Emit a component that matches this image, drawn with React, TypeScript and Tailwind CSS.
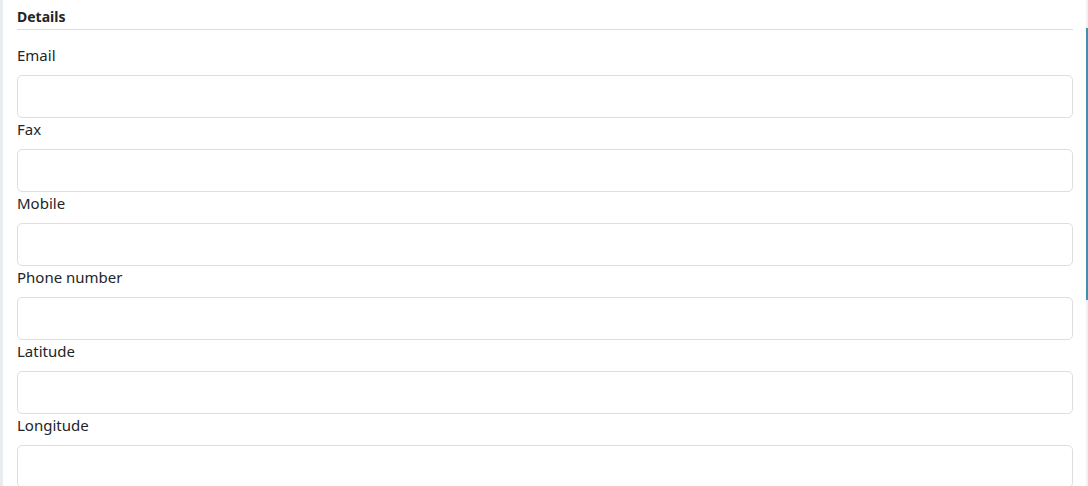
const fields = ["Email", "Fax", "Mobile", "Phone number", "Latitude", "Longitude"];

export default function App() {
  return (
    <div
      className="flex w-[1088px] h-[486px] overflow-hidden bg-white text-[#212529]"
      style={{ fontFamily: '"Noto Sans", "Open Sans", sans-serif' }}
    >
      {/* left gutter */}
      <div className="w-[3px] shrink-0 bg-[#e9ecef]" />

      {/* card */}
      <div className="flex-1 pl-[14px] pr-[13px] pt-[7px]">
        <div className="border-b border-[#dcdcdc] pb-[2px]">
          <h3 className="text-[14px] leading-[20px] font-bold">Details</h3>
        </div>

        <div className="mt-[14px] flex flex-col">
          {fields.map((label) => (
            <div key={label} className="flex flex-col">
              <label className="text-[15px] leading-[23px] mb-[8px]">{label}</label>
              <input
                type="text"
                className="h-[43px] w-full rounded-[5px] border border-[#dedede] bg-white px-3 outline-none"
              />
            </div>
          ))}
        </div>
      </div>

      {/* scrollbar */}
      <div className="w-[2px] shrink-0 flex flex-col bg-[#f1f1f1]">
        <div className="h-[28px]" />
        <div className="h-[272px] bg-[#3f8fb0]" />
      </div>
    </div>
  );
}
